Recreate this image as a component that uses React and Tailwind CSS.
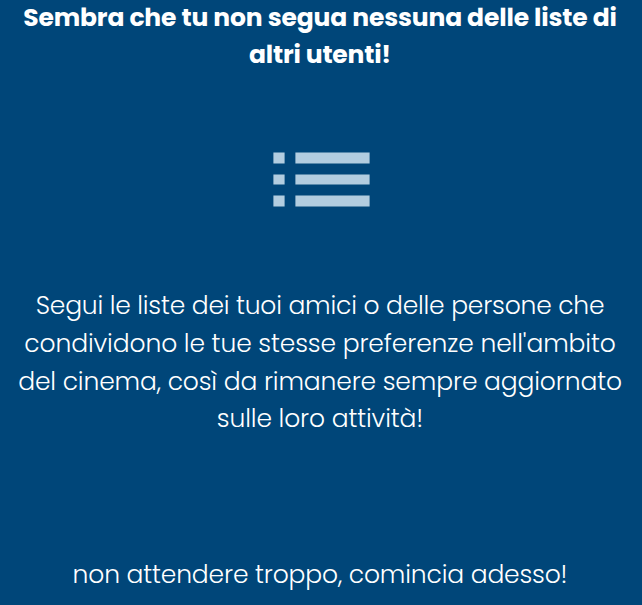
const headingLines = [
  { text: "Sembra che tu non segua nessuna delle liste di", style: "tracking-[-0.15px]" },
  { text: "altri utenti!", style: "tracking-[-0.2px]" },
];

const bodyLines = [
  { text: "Segui le liste dei tuoi amici o delle persone che", style: "tracking-[-0.18px]" },
  { text: "condividono le tue stesse preferenze nell'ambito", style: "tracking-[-0.11px]" },
  { text: "del cinema, così da rimanere sempre aggiornato", style: "tracking-[-0.13px]" },
  { text: "sulle loro attività!", style: "tracking-[-0.12px]" },
];

function Lines({ lines }) {
  return lines.map(({ text, style }) => (
    <span key={text} className={`block whitespace-nowrap ${style}`}>{text}</span>
  ));
}

function ListIcon() {
  return (
    <svg className="mt-[78.4px] ml-[2px] block h-[55px] w-[97px]" viewBox="0 0 97 55" fill="#b2cde0" aria-hidden="true">
      <path d="M.4.4h11.2v11.2H.4zM22.4.4h74.2v11.2H22.4zM.4 22.6h11.2v10H.4zM22.4 22.6h74.2v10H22.4zM.4 43.4h11.2v11.2H.4zM22.4 43.4h74.2v11.2H22.4z" />
    </svg>
  );
}

export default function App() {
  return (
    <main className="flex h-[605px] w-[642px] flex-col items-center overflow-hidden bg-[#004679] pr-[2px] text-center font-['Poppins','Inter',sans-serif] text-[25px] leading-[37.6px] font-light text-white">
      <h1 className="-mt-[1.4px] font-bold">
        <Lines lines={headingLines} />
      </h1>
      <ListIcon />
      <p className="mt-[80.2px]">
        <Lines lines={bodyLines} />
      </p>
      <p className="mt-[118px] whitespace-nowrap tracking-[-0.15px]">non attendere troppo, comincia adesso!</p>
    </main>
  );
}
